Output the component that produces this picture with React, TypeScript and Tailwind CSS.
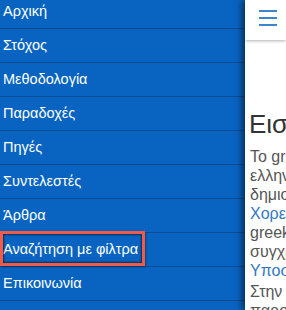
import React from "react";

const items = [
  "Αρχική",
  "Στόχος",
  "Μεθοδολογία",
  "Παραδοχές",
  "Πηγές",
  "Συντελεστές",
  "Άρθρα",
  "Αναζήτηση με φίλτρα",
  "Επικοινωνία",
  "",
];

const lines: { t: string; link?: boolean }[] = [
  { t: "Το greekhistory είναι" },
  { t: "ελληνικό έργο" },
  { t: "δημιουργήθηκε" },
  { t: "Χορευτικό", link: true },
  { t: "greek" },
  { t: "συγχρονικά" },
  { t: "Υποστηρίζεται", link: true },
];

export default function App() {
  return (
    <div
      className="flex h-[310px] w-[286px] overflow-hidden bg-white"
      style={{ fontFamily: '"Liberation Sans", Arial, sans-serif' }}
    >
      <nav className="w-[245px] shrink-0 bg-[#0864c0]">
        <ul className="-mt-[5px]">
          {items.map((label, i) => (
            <li
              key={i}
              className="relative flex h-[34px] items-center border-b border-[#0b4d94] pl-[3px] text-[14.5px] text-white"
            >
              {label}
              {label === "Αναζήτηση με φίλτρα" && (
                <span className="pointer-events-none absolute left-0 top-[-2px] h-[35px] w-[145px] border-[3px] border-[#f25a4c] shadow-[inset_0_0_2px_1px_rgba(0,0,0,0.55),1px_1px_2px_rgba(0,0,0,0.35)]" />
              )}
            </li>
          ))}
        </ul>
      </nav>
      <main className="relative z-10 min-w-0 flex-1 bg-white shadow-[-3px_0_7px_rgba(0,0,0,0.55)]">
        <div className="overflow-hidden">
          <header className="flex h-[40px] flex-col gap-[5px] bg-white pl-[14px] pt-[10px] shadow-[0_1px_3px_rgba(0,0,0,0.3)]">
            <span className="block h-[2px] w-[18px] bg-[#3a86cc]" />
            <span className="block h-[2px] w-[18px] bg-[#3a86cc]" />
            <span className="block h-[2px] w-[18px] bg-[#3a86cc]" />
          </header>
          <div className="pl-[4px] pt-[70px]">
            <h1 className="whitespace-nowrap text-[26px] leading-[29px] text-[#333]">Εισαγωγή</h1>
            <div className="mt-[8px] pl-[1px] text-[16px] leading-[19px] text-[#555]">
              {lines.map((l, i) => (
                <div
                  key={i}
                  className={`whitespace-nowrap ${l.link ? "text-[#3278c0]" : ""}`}
                >
                  {l.t}
                </div>
              ))}
              <div className="mt-[2px] whitespace-nowrap">Στην παρούσα</div>
              <div className="whitespace-nowrap">παρουσίαση</div>
            </div>
          </div>
        </div>
      </main>
    </div>
  );
}
